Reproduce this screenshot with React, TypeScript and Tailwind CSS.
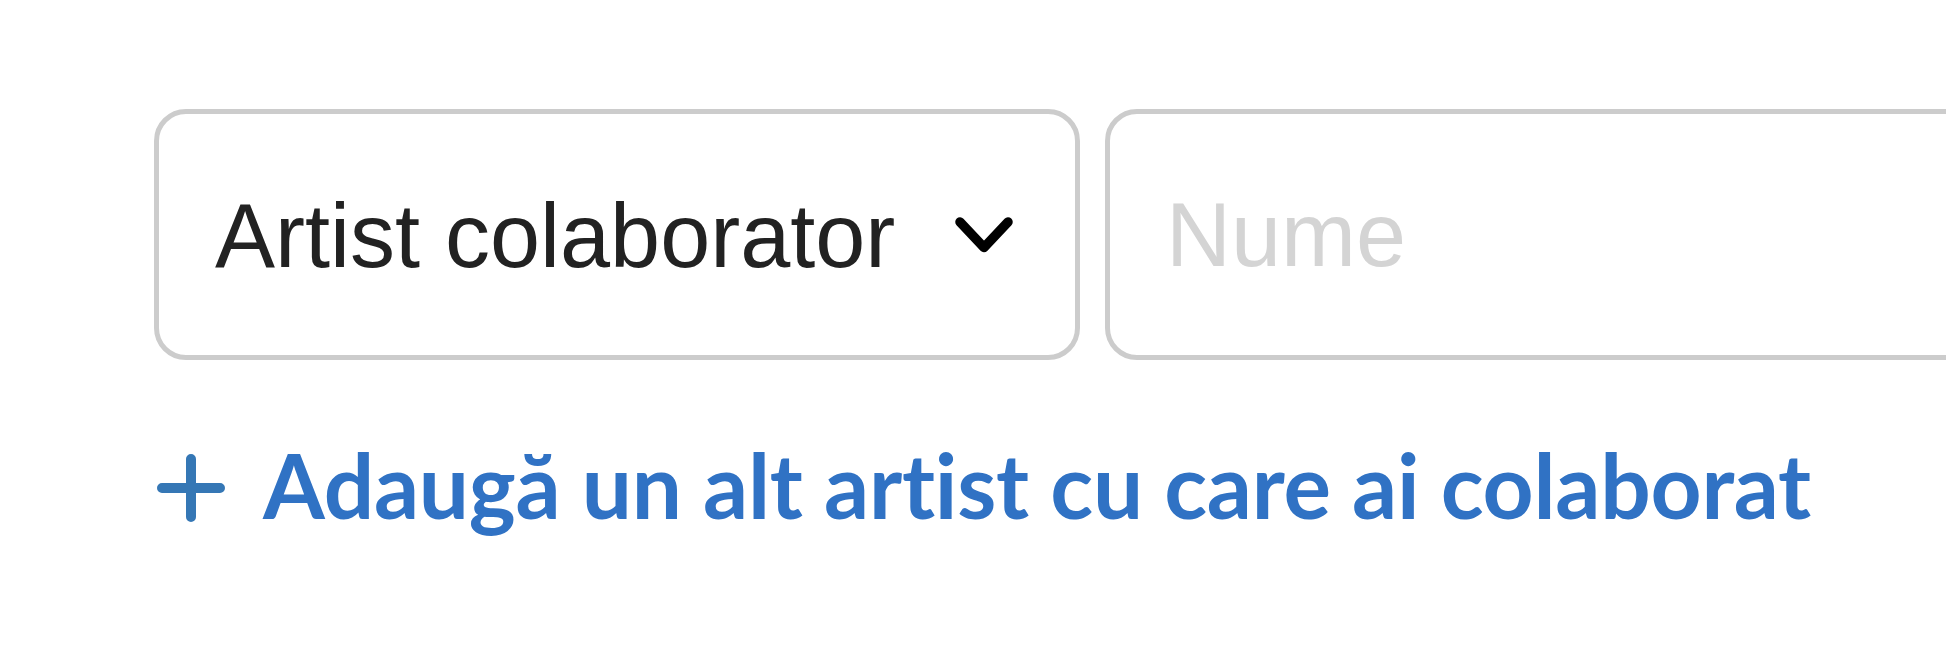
export default function App() {
  return (
    <div className="h-[662px] w-full overflow-hidden bg-white pl-[154px] pt-[109px]">
      <div className="flex gap-[25px]">
        <div className="flex h-[251px] w-[926px] shrink-0 items-center justify-between rounded-[32px] border-[5px] border-[#cccccc] pl-[56px] pr-[62px]">
          <span className="pt-[2px] font-['Liberation_Sans',Arial,sans-serif] text-[90px] leading-none text-[#222222]">
            Artist colaborator
          </span>
          <svg width="58" height="36" viewBox="0 0 58 36" fill="none" className="mt-[1px] shrink-0">
            <polyline
              points="5,5 29,30.5 53,5"
              stroke="#000000"
              strokeWidth="9.5"
              strokeLinecap="round"
              strokeLinejoin="round"
            />
          </svg>
        </div>
        <div className="flex h-[251px] w-[926px] shrink-0 items-center rounded-[32px] border-[5px] border-[#cccccc] pl-[56px] pr-[56px]">
          <input
            type="text"
            placeholder="Nume"
            className="w-full bg-transparent pt-[2px] font-['Liberation_Sans',Arial,sans-serif] text-[90px] leading-none text-[#222222] outline-none placeholder:text-[#d4d4d4]"
          />
        </div>
      </div>
      <div className="mt-[80px] flex items-start gap-[38px]">
        <svg width="68" height="68" viewBox="0 0 68 68" fill="none" className="mt-[14px] ml-[3px] shrink-0">
          <path d="M34 5V63M5 34H63" stroke="#3577b5" strokeWidth="10" strokeLinecap="round" />
        </svg>
        <span className="font-['Lato',sans-serif] text-[89px] font-bold leading-none tracking-[-0.25px] text-[#3072c4] [font-variant-ligatures:none]">
          Adaugă un alt artist cu care ai colaborat
        </span>
      </div>
    </div>
  );
}
